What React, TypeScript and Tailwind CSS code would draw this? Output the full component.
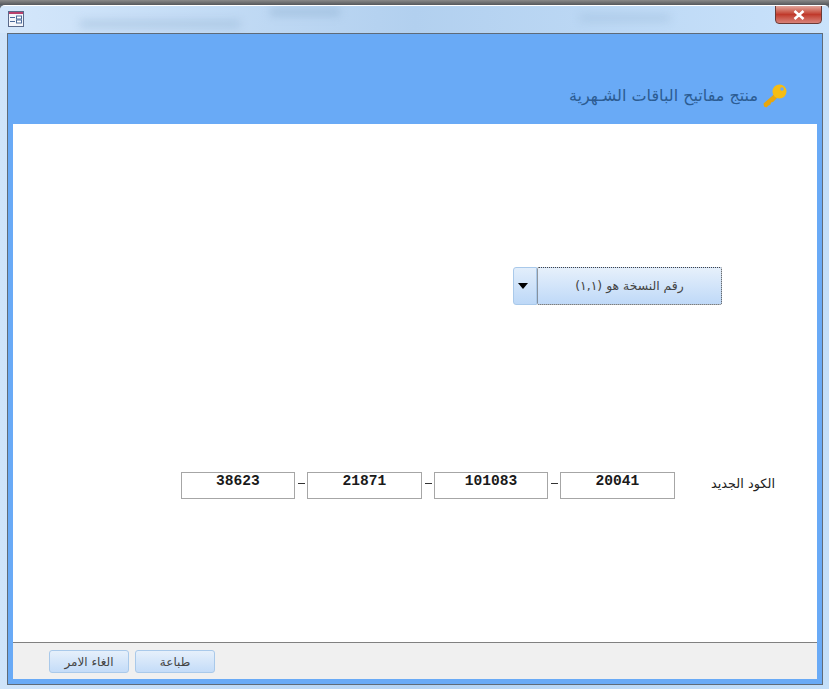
import { FC } from 'react'

const arabic = "font-['DejaVu_Sans',sans-serif]"

const KeyIcon: FC = () => (
  <svg width="24" height="24" viewBox="0 0 24 24" className="block">
    <path d="M11.5 10 L0.5 19.5 L1 22.5 L3.5 23.5 L5.5 21.5 L7.5 20.5 L8 18.5 L10 18 L15 13 Z" fill="#e8a60c" />
    <circle cx="16.5" cy="7.5" r="7" fill="#f6bd12" />
    <circle cx="19" cy="5" r="1.8" fill="#69aaf6" />
  </svg>
)

const FormIcon: FC = () => (
  <svg width="16" height="16" viewBox="0 0 16 16" className="block">
    <rect x="0.5" y="0.5" width="15" height="15" fill="#f4f6fb" stroke="#5a6a8a" />
    <rect x="1" y="1" width="14" height="2" fill="#b8406c" />
    <path d="M2 6.5h5M2 10.5h5" stroke="#4a6a9a" strokeWidth="1" />
    <rect x="8.5" y="5" width="5" height="3" fill="#fff" stroke="#4a6a9a" />
    <rect x="8.5" y="9" width="5" height="3" fill="#fff" stroke="#4a6a9a" />
  </svg>
)

const CodeBox: FC<{ value: string; width: string }> = ({ value, width }) => (
  <div
    className={`${width} h-[27px] border border-[#a6a6a6] bg-white text-center font-['Liberation_Mono',monospace] text-[14.6px] font-bold leading-[16px] text-[#1a1a1a]`}
  >
    {value}
  </div>
)

const Dash: FC = () => (
  <div className="w-[12px] flex justify-center pt-[11px]">
    <span className="block w-[7px] h-px bg-[#333]" />
  </div>
)

const FooterButton: FC<{ label: string }> = ({ label }) => (
  <button
    dir="rtl"
    className={`w-[80px] h-[23px] rounded-[3px] border border-[#a9c9ea] bg-gradient-to-b from-[#e6f0fb] to-[#c4dcf8] text-[12px] text-[#444] ${arabic}`}
  >
    {label}
  </button>
)

export default function App() {
  return (
    <div className="w-[829px] h-[689px] overflow-hidden flex flex-col bg-[#5f6a75]">
      {/* blurred desktop strip behind the window */}
      <div className="h-[5px] bg-gradient-to-b from-[#8a8a8a] to-[#55585c]" />

      <div className="flex-1 flex flex-col rounded-tl-[5px] rounded-tr-[5px] border-t border-white bg-gradient-to-r from-[#cfe4fa] via-[#b4d3f3] to-[#c4dff9] overflow-hidden">
        {/* title bar */}
        <div className="relative h-[27px] flex justify-between items-start pl-[8px] pr-[7px] bg-gradient-to-r from-[#d4e7fb] via-[#b2d0ef] to-[#c9e2fb] overflow-hidden">
          {/* smudges of the blurred ribbon showing through the glass */}
          <div className="absolute left-[80px] top-[14px] w-[160px] h-[8px] bg-[#8fb0d0] opacity-40 blur-[4px]" />
          <div className="absolute left-[270px] top-[2px] w-[70px] h-[8px] bg-[#8fb0d0] opacity-50 blur-[4px]" />
          <div className="absolute left-[580px] top-[8px] w-[90px] h-[8px] bg-[#8fb0d0] opacity-30 blur-[4px]" />
          <div className="relative mt-[5px]">
            <FormIcon />
          </div>
          <div className="relative w-[47px] h-[19px] -mt-px rounded-b-[4px] border border-[#6b3a36] bg-gradient-to-b from-[#e0a49b] via-[#c0392b] to-[#d8827a] flex items-center justify-center text-white">
            <svg width="12" height="10" viewBox="0 0 12 10">
              <path d="M1.5 1 L10.5 9 M10.5 1 L1.5 9" stroke="#fff" strokeWidth="2.6" />
            </svg>
          </div>
        </div>

        {/* form area */}
        <div className="ml-[7px] mr-[6px] w-[816px] h-[652px] border border-[#5f6b78] bg-[#69aaf6] flex flex-col">
          <div className="h-[90px] flex justify-end items-start pr-[35px] pt-[50px] shrink-0">
            <div className="flex items-center gap-[5px]">
              <div dir="rtl" className={`text-[16px] leading-[24px] text-[#2c5c92] ${arabic}`}>
                منتج مفاتيح الباقات الشـهرية
              </div>
              <KeyIcon />
            </div>
          </div>

          <div className="mx-[5px] flex-1 flex flex-col">
            <div className="h-[518px] bg-white flex flex-col">
              <div className="flex justify-end pr-[95px] pt-[143px]">
                <div className="w-[24px] h-[38px] rounded-l-[3px] border border-[#a9c9ea] bg-gradient-to-b from-[#e2eefb] to-[#bdd8f7] flex items-center justify-center pr-[4px]">
                  <svg width="10" height="6" viewBox="0 0 10 6">
                    <path d="M0 0H10L5 6Z" fill="#000" />
                  </svg>
                </div>
                <div
                  dir="rtl"
                  className={`w-[185px] h-[38px] rounded-[2px] border border-dotted border-[#444] bg-gradient-to-b from-[#e6f0fb] to-[#bfd9f8] flex items-center justify-center text-[12.4px] text-[#444] ${arabic}`}
                >
                  رقم النسخة هو (١,١)
                </div>
              </div>

              <div className="flex pl-[168px] pt-[167px]">
                <CodeBox value="38623" width="w-[114px]" />
                <Dash />
                <CodeBox value="21871" width="w-[115px]" />
                <Dash />
                <CodeBox value="101083" width="w-[114px]" />
                <Dash />
                <CodeBox value="20041" width="w-[115px]" />
                <div dir="rtl" className={`ml-[36px] w-[64px] pt-[3px] text-[12.9px] leading-[18px] text-[#222] whitespace-nowrap ${arabic}`}>
                  الكود الجديد
                </div>
              </div>
            </div>

            {/* footer */}
            <div className="h-[37px] border-t border-[#808080] bg-[#f0f0f0] flex items-start gap-[6px] pl-[36px] pt-[7px]">
              <FooterButton label="الغاء الامر" />
              <FooterButton label="طباعة" />
            </div>
          </div>
          <div className="h-[4px] shrink-0" />
        </div>
      </div>
    </div>
  )
}
